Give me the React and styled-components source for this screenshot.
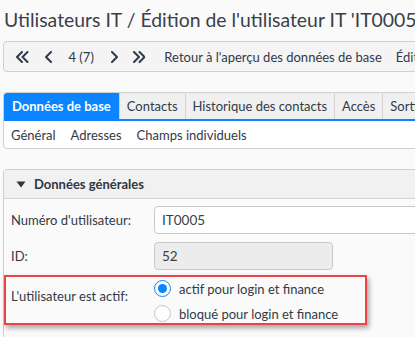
import styled, { createGlobalStyle } from 'styled-components';

const GlobalStyle = createGlobalStyle`
  html, body {
    margin: 0;
    padding: 0;
    background: #fafafa;
  }
  body {
    font-family: Lato, "Noto Sans", sans-serif;
    color: #333a45;
    font-size: 13px;
  }
`;

const Page = styled.div`
  width: 415px;
  height: 337px;
  overflow: hidden;
  padding-left: 3px;
  box-sizing: border-box;
  white-space: nowrap;
`;

const Title = styled.h1`
  margin: 0;
  padding: 5px 0 0 1px;
  height: 36px;
  box-sizing: border-box;
  font-size: 19.4px;
  font-weight: 400;
  line-height: 30px;
  color: #3a3f48;
`;

const Toolbar = styled.div`
  margin-top: 5px;
  margin-right: -60px;
  height: 31px;
  box-sizing: border-box;
  border: 1px solid #cfcfcf;
  border-radius: 4px;
  background: #f4f4f4;
  display: flex;
  align-items: center;
  padding-left: 12px;
  font-size: 13px;
`;

const NavItem = styled.span`
  display: flex;
  align-items: center;
  margin-right: ${(p) => p.space}px;
  color: #2f3a4a;
`;

const TabBox = styled.div`
  margin-top: 20px;
  margin-right: -60px;
  border: 1px solid #cfcfcf;
  border-radius: 4px;
  background: #fff;
  overflow: hidden;
`;

const TabRow = styled.div`
  display: flex;
  border-bottom: 2px solid #0a84ff;
  background: #f0f0f0;
`;

const Tab = styled.div`
  height: 26px;
  line-height: 26px;
  padding: 0 ${(p) => (p.active ? 8 : 7)}px;
  border-right: 1px solid #d2d2d2;
  background: ${(p) => (p.active ? '#0a84ff' : '#f0f0f0')};
  color: ${(p) => (p.active ? '#fff' : '#333a45')};
  font-weight: ${(p) => (p.active ? 700 : 400)};
`;

const SubTabs = styled.div`
  display: flex;
  gap: 15px;
  height: 27px;
  align-items: center;
  padding: 1px 0 0 7px;
  box-sizing: border-box;
`;

const Section = styled.div`
  margin-top: 20px;
  margin-right: -60px;
  border: 1px solid #cfcfcf;
  border-bottom: none;
  border-radius: 4px 4px 0 0;
  background: #fafafa;
  height: 200px;
`;

const SectionHeader = styled.div`
  height: 28px;
  display: flex;
  align-items: center;
  gap: 8px;
  padding-left: 12px;
  background: #f1f1f1;
  border-bottom: 1px solid #d2d2d2;
  font-weight: 700;
  color: #2f3642;
`;

const SectionBody = styled.div`
  padding: 7px 0 0 7px;
`;

const Row = styled.div`
  display: grid;
  grid-template-columns: 143px 1fr;
  align-items: center;
  margin-bottom: 8px;
`;

const Label = styled.span`
  color: #333a45;
`;

const Input = styled.div`
  height: 28px;
  box-sizing: border-box;
  border: 1px solid #c8c8c8;
  border-radius: 4px;
  background: ${(p) => (p.disabled ? '#ececec' : '#fff')};
  width: ${(p) => p.width || 'auto'};
  display: flex;
  align-items: center;
  padding-left: 7px;
  font-size: 13.5px;
  color: #3a3f48;
`;

const Highlight = styled.div`
  display: grid;
  grid-template-columns: 143px 1fr;
  align-items: start;
  margin-left: -7px;
  margin-top: -3px;
  width: 363px;
  box-sizing: border-box;
  border: 2px solid #ec4349;
  padding: 3px 0 0 5px;
  height: 50px;
  box-shadow: 2px 3px 5px rgba(0, 0, 0, 0.35);
`;

const HighlightLabel = styled.span`
  padding-top: 8px;
`;

const RadioList = styled.div`
  display: flex;
  flex-direction: column;
  gap: 8px;
`;

const RadioOption = styled.label`
  display: flex;
  align-items: center;
  gap: 8px;
  height: 17px;
`;

const RadioCircle = styled.span`
  width: 17px;
  height: 17px;
  box-sizing: border-box;
  border-radius: 50%;
  border: ${(p) => (p.checked ? '1.5px solid #0a84ff' : '1px solid #c4c4c4')};
  background: #fff;
  display: flex;
  align-items: center;
  justify-content: center;
  flex-shrink: 0;

  &::after {
    content: '';
    display: ${(p) => (p.checked ? 'block' : 'none')};
    width: 9px;
    height: 9px;
    border-radius: 50%;
    background: #0a84ff;
  }
`;

const Chevron = ({ double, dir }) => {
  const left = dir === 'left';
  const one = left ? 'M6 1 L1 6 L6 11' : 'M1 1 L6 6 L1 11';
  const two = left ? 'M11.5 1 L6.5 6 L11.5 11' : 'M6.5 1 L11.5 6 L6.5 11';
  return (
    <svg width={double ? 12.5 : 7} height="12" viewBox={double ? '0 0 12.5 12' : '0 0 7 12'}>
      <path d={one} fill="none" stroke="currentColor" strokeWidth="2" strokeLinecap="round" strokeLinejoin="round" />
      {double && (
        <path d={two} fill="none" stroke="currentColor" strokeWidth="2" strokeLinecap="round" strokeLinejoin="round" />
      )}
    </svg>
  );
};

const Caret = () => (
  <svg width="10" height="7" viewBox="0 0 10 7">
    <path d="M0.5 0.5 L9.5 0.5 L5 6.5 Z" fill="#2f3642" />
  </svg>
);

const App = () => {
  return (
    <Page>
      <GlobalStyle />
      <Title>Utilisateurs IT / Édition de l'utilisateur IT 'IT0005'</Title>
      <Toolbar>
        <NavItem space={16}>
          <Chevron double dir="left" />
        </NavItem>
        <NavItem space={17}>
          <Chevron dir="left" />
        </NavItem>
        <NavItem space={17}>4 (7)</NavItem>
        <NavItem space={15}>
          <Chevron dir="right" />
        </NavItem>
        <NavItem space={19}>
          <Chevron double dir="right" />
        </NavItem>
        <NavItem space={14}>Retour à l'aperçu des données de base</NavItem>
        <NavItem space={14}>Éditer</NavItem>
      </Toolbar>

      <TabBox>
        <TabRow>
          <Tab active>Données de base</Tab>
          <Tab>Contacts</Tab>
          <Tab>Historique des contacts</Tab>
          <Tab>Accès</Tab>
          <Tab>Sorties</Tab>
        </TabRow>
        <SubTabs>
          <span>Général</span>
          <span>Adresses</span>
          <span>Champs individuels</span>
        </SubTabs>
      </TabBox>

      <Section>
        <SectionHeader>
          <Caret />
          Données générales
        </SectionHeader>
        <SectionBody>
          <Row>
            <Label>Numéro d'utilisateur:</Label>
            <Input>IT0005</Input>
          </Row>
          <Row>
            <Label>ID:</Label>
            <Input disabled width="179px">52</Input>
          </Row>
          <Highlight>
            <HighlightLabel>L'utilisateur est actif:</HighlightLabel>
            <RadioList>
              <RadioOption>
                <RadioCircle checked />
                actif pour login et finance
              </RadioOption>
              <RadioOption>
                <RadioCircle />
                bloqué pour login et finance
              </RadioOption>
            </RadioList>
          </Highlight>
        </SectionBody>
      </Section>
    </Page>
  );
};

export default App;
